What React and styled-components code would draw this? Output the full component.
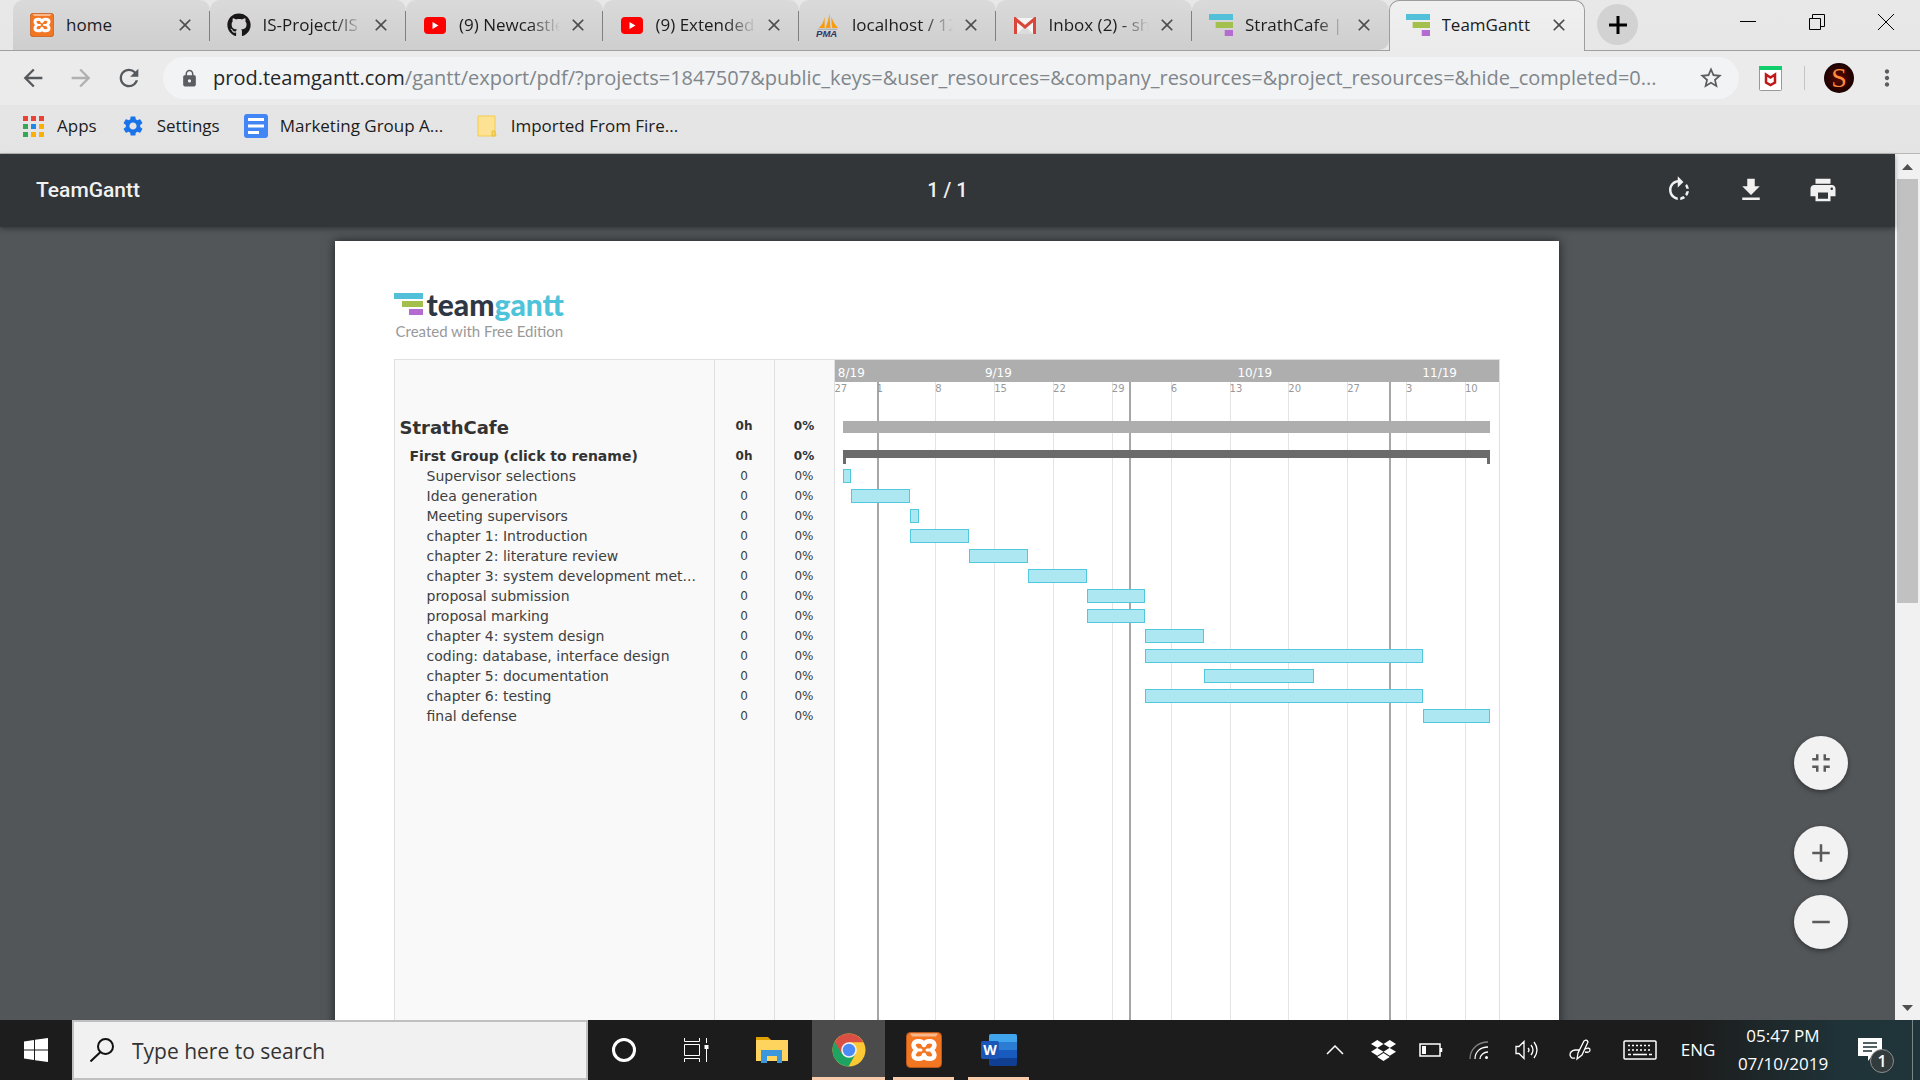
import React from 'react';
import styled, { createGlobalStyle, css } from 'styled-components';
import { FaDropbox, FaGithub } from 'react-icons/fa';
import {
  MdRotateRight, MdFileDownload, MdPrint, MdFullscreenExit, MdAdd, MdRemove,
  MdLock, MdStarBorder, MdMoreVert, MdArrowBack, MdArrowForward, MdRefresh, MdSettings, MdClose,
} from 'react-icons/md';

const Global = createGlobalStyle`
  * { box-sizing: border-box; }
  html, body, #root { height: 100%; }
  body { margin: 0; overflow: hidden; font-family: 'Open Sans', 'Noto Sans', sans-serif; }
  button { border: 0; padding: 0; background: none; font: inherit; color: inherit; cursor: pointer; }
`;

const Desktop = styled.div`
  display: flex;
  flex-direction: column;
  height: 100vh;
`;

/* ---------- browser chrome ---------- */

const Chrome = styled.header`
  flex: none;
  background: linear-gradient(#e8e8e8, #e4e4e4);
  border-bottom: 1px solid #b8b8b8;
`;

const TabStrip = styled.div`
  display: flex;
  height: 51px;
  padding-left: 13px;
  box-shadow: inset 0 -1px #a0a0a0;
`;

const Tabs = styled.nav`
  flex: 1;
  display: grid;
  grid-template-columns: repeat(8, minmax(0, 1fr));
  max-width: 1572px;
`;

const Tab = styled.div`
  display: flex;
  align-items: center;
  padding: 0 15px 0 17px;
  position: relative;
  height: 50px;
  background: linear-gradient(#dadada, #cecece);
  border-radius: 10px 10px 0 0;
  &:not(:last-child)::after {
    content: '';
    position: absolute;
    right: 0;
    top: 11px;
    width: 1px;
    height: 30px;
    background: #808080;
  }
  ${(p) => p.$beforeActive && css`
    &&::after { display: none; }
    border-bottom-right-radius: 10px;
  `}
  ${(p) => p.$active && css`
    height: 51px;
    padding: 0 15px 2px 16px;
    background: linear-gradient(#f0f0f0, #ebebeb);
    border: 1px solid #9d9d9d;
    border-bottom: 0;
  `}
`;

const Favicon = styled.span`
  flex: none;
  display: flex;
  justify-content: center;
  width: 24px;
  margin-right: 12px;
`;

const TabTitle = styled.a`
  flex: 1;
  min-width: 0;
  overflow: hidden;
  white-space: nowrap;
  font-size: 17px;
  line-height: 24px;
  color: #1c1c1c;
  text-decoration: none;
  ${(p) => p.$fade && css`mask-image: linear-gradient(to right, #000 70%, transparent);`}
`;

const TabClose = styled.button`
  flex: none;
  display: flex;
  margin-left: 8px;
  color: #4d4d4d;
`;

const NewTab = styled.button`
  width: 41px;
  height: 41px;
  margin: 4px 0 0 12px;
  border-radius: 50%;
  background: #d2d2d2;
  display: grid;
  place-items: center;
`;

const WindowControls = styled.div`
  display: flex;
  margin-left: auto;
  button { width: 69px; height: 43px; display: grid; place-items: center; }
`;

const Toolbar = styled.div`
  display: flex;
  align-items: center;
  height: 54px;
  padding: 0 20px 0 19px;
  background: #ebebeb;
  color: #5a5d61;
`;

const NavButton = styled.button`
  display: grid;
  place-items: center;
  width: 28px;
  margin-right: 20px;
  color: ${(p) => (p.$muted ? '#b0b0b0' : '#55585c')};
`;

const AddressBar = styled.div`
  flex: 1;
  min-width: 0;
  display: flex;
  align-items: center;
  height: 42px;
  padding: 0 15px 0 17px;
  border-radius: 21px;
  background: #f1f3f4;
`;

const Url = styled.a`
  flex: 1;
  min-width: 0;
  margin: 0 28px 0 14px;
  overflow: hidden;
  text-overflow: ellipsis;
  white-space: nowrap;
  font-size: 20px;
  line-height: 30px;
  color: #80868b;
  text-decoration: none;
  b { font-weight: 400; color: #24272a; }
`;

const Extension = styled.button`
  display: flex;
  margin-left: 20px;
`;

const ToolbarDivider = styled.span`
  width: 1px;
  height: 24px;
  margin: 0 19px 0 22px;
  background: #c4c4c4;
`;

const Avatar = styled.button`
  width: 30px;
  height: 30px;
  border-radius: 50%;
  background: radial-gradient(#5a0a00, #160000 75%);
  color: #ff8a3c;
  font: 400 28px/30px 'Liberation Serif', serif;
`;

const Bookmarks = styled.nav`
  display: flex;
  align-items: center;
  height: 48px;
  padding: 0 21px 6px;
  gap: 24px;
`;

const Bookmark = styled.a`
  display: flex;
  align-items: center;
  gap: 12px;
  min-width: ${(p) => (p.$wide ? 207 : 0)}px;
  color: #1c1c1c;
  text-decoration: none;
  font-size: 17px;
  line-height: 24px;
`;

const BookmarkIcon = styled.span`
  display: flex;
  justify-content: center;
  width: 24px;
`;

/* ---------- pdf viewer ---------- */

const Viewer = styled.main`
  position: relative;
  flex: 1;
  min-height: 0;
  display: flex;
  background: #525659;
`;

const ViewerBody = styled.div`
  flex: 1;
  min-width: 0;
  display: flex;
  flex-direction: column;
`;

const PdfBar = styled.div`
  z-index: 1;
  flex: none;
  display: grid;
  grid-template-columns: 1fr auto 1fr;
  align-items: center;
  height: 73px;
  padding: 0 36px 2px;
  background: #323639;
  box-shadow: 0 2px 5px rgba(0, 0, 0, 0.35);
  color: #f1f1f1;
  font: 500 20px/28px Roboto, sans-serif;
`;

const PdfTitle = styled.h1`
  margin: 0;
  font-size: 21px;
  font-weight: 500;
`;

const PdfActions = styled.div`
  display: flex;
  justify-content: flex-end;
  gap: 42px;
  padding-right: 21px;
  button { display: flex; }
`;

const Canvas = styled.div`
  flex: 1;
  min-height: 0;
  overflow: hidden;
  display: flex;
  justify-content: center;
  align-items: flex-start;
  padding: 14px 2px 0 0;
`;

const Sheet = styled.article`
  width: 100%;
  max-width: 1224px;
  min-height: 1584px;
  display: flex;
  flex-direction: column;
  padding: 48px 59px;
  background: #fff;
  box-shadow: 0 0 10px rgba(0, 0, 0, 0.6);
`;

const Brand = styled.div`
  display: flex;
  align-items: flex-start;
  gap: 4px;
  height: 32px;
  font: 900 30px/30px Lato, sans-serif;
  color: #2f3744;
  svg { margin-top: 4px; }
  em { font-style: normal; color: #4ec3d9; }
`;

const Edition = styled.p`
  margin: 0 0 18px 2px;
  font: 400 15px/20px Lato, sans-serif;
  color: #999;
`;

const Gantt = styled.section`
  flex: 1;
  display: grid;
  grid-template-columns: 440px minmax(0, 1fr);
  border: 1px solid #e0e0e0;
  border-width: 1px 1px 0;
  font-family: 'DejaVu Sans', sans-serif;
  color: #404040;
`;

const TaskTable = styled.table`
  width: 100%;
  height: 100%;
  table-layout: fixed;
  border-collapse: collapse;
  background: #f9f9f9;
  th, td {
    padding: 0;
    height: 20px;
    border-right: 1px solid #e0e0e0;
    font-size: 12px;
    line-height: 20px;
    text-align: center;
    font-weight: 400;
    overflow: hidden;
    white-space: nowrap;
    text-overflow: ellipsis;
  }
`;

const Row = styled.tr`
  && > * {
    font-weight: ${(p) => (p.$level < 2 ? 700 : 400)};
    ${(p) => p.$level < 2 && css`color: #333;`}
    ${(p) => p.$level === 0 && css`height: 40px;`}
  }
  && > th {
    text-align: left;
    font-size: ${(p) => (p.$level === 0 ? 18 : 14)}px;
    padding-top: ${(p) => (p.$level === 0 ? 4 : 0)}px;
    padding-left: ${(p) => [5, 15, 32][p.$level]}px;
  }
`;

const HeadRow = styled.tr`
  && > td { height: 46px; }
`;

const Filler = styled.tr`
  && > td { height: auto; }
`;

const Timeline = styled.div`
  position: relative;
`;

const Months = styled.div`
  position: relative;
  height: 22px;
  background: #aeaeae;
  font-size: 12px;
  line-height: 26px;
  color: #fff;
`;

const Days = styled.div`
  position: relative;
  height: 24px;
  font-size: 10px;
  line-height: 14px;
  color: #999;
`;

const Mark = styled.span`
  position: absolute;
  top: 0;
  ${(p) => p.$centered && css`transform: translateX(-50%);`}
`;

const GridLine = styled.i`
  position: absolute;
  top: 22px;
  bottom: 0;
  width: ${(p) => (p.$month ? 2 : 1)}px;
  background: ${(p) => (p.$month ? '#a6a6a6' : '#e4e4e4')};
`;

const Lane = styled.div`
  position: relative;
  height: ${(p) => (p.$level === 0 ? 40 : 20)}px;
`;

const Bar = styled.span`
  position: absolute;
  ${(p) => p.$level === 0 && css`top: 15px; height: 12px; background: #aeaeae;`}
  ${(p) => p.$level === 1 && css`
    top: 4px;
    height: 14px;
    border: solid #6b6b6b;
    border-width: 8px 3px 0;
  `}
  ${(p) => p.$level === 2 && css`
    top: 3px;
    height: 14px;
    background: #ade8f2;
    border: 1px solid #50c8dd;
  `}
`;

const ZoomControls = styled.div`
  position: absolute;
  right: 72px;
  bottom: 71px;
  display: grid;
  gap: 15px;
`;

const Fab = styled.button`
  width: 54px;
  height: 54px;
  border-radius: 50%;
  && { background: #f2f2f2; }
  color: #5a5a5a;
  display: grid;
  place-items: center;
  box-shadow: 0 2px 5px rgba(0, 0, 0, 0.4);
  &:first-child { margin-bottom: 21px; }
`;

const Scrollbar = styled.div`
  flex: none;
  width: 25px;
  display: flex;
  flex-direction: column;
  align-items: center;
  background: #f1f1f1;
  svg { flex: none; }
`;

const Thumb = styled.div`
  flex: none;
  width: 21px;
  height: 49%;
  margin-bottom: auto;
  background: #c1c1c1;
`;

/* ---------- taskbar ---------- */

const Taskbar = styled.footer`
  flex: none;
  display: flex;
  height: 60px;
  background: linear-gradient(to right, #1c1c1c 88%, #1f3338 96%, #20353a);
  color: #fff;
`;

const TaskButton = styled.button`
  display: grid;
  place-items: center;
  width: ${(p) => p.$width}px;
  ${(p) => p.$running && css`box-shadow: inset 0 -3px #f8cbaa;`}
  && { background: ${(p) => (p.$focused ? '#4b4b4b' : 'none')}; }
`;

const AppButtons = styled.div`
  display: flex;
  margin-left: 8px;
  gap: 14px;
`;

const Search = styled.label`
  display: flex;
  align-items: center;
  width: 516px;
  padding-left: 16px;
  gap: 18px;
  background: #f1f1f1;
  border: 2px solid #c0c0c0;
  input {
    flex: 1;
    min-width: 0;
    border: 0;
    padding: 2px 0 0;
    outline: 0;
    background: none;
    font: 400 21px/30px 'Open Sans', sans-serif;
    color: #333;
  }
  input::placeholder { color: #333; opacity: 1; }
`;

const Tray = styled.div`
  display: flex;
  align-items: center;
  margin-left: auto;
  font-size: 17px;
  line-height: 28px;
`;

const TrayButton = styled.button`
  display: grid;
  place-items: center;
  width: ${(p) => p.$width}px;
  height: 60px;
`;

const Clock = styled.button`
  width: 116px;
  margin-right: 12px;
  text-align: center;
  span { display: block; }
`;

const Notices = styled.button`
  position: relative;
  width: 60px;
  height: 60px;
  margin-right: 7px;
  border-right: 1px solid #7a8588;
  svg { position: absolute; left: 5px; top: 17px; }
  span {
    position: absolute;
    left: 17px;
    top: 29px;
    width: 24px;
    height: 24px;
    border: 1px solid #8d8d8d;
    border-radius: 50%;
    background: #333b3d;
    font-size: 16px;
    line-height: 22px;
    font-weight: 600;
  }
`;

/* ---------- drawings ---------- */

const XamppIcon = ({ width = 24, height = 24 }) => (
  <svg width={width} height={height} viewBox="0 0 36 36" aria-hidden="true">
    <rect x="0.5" y="0.5" width="35" height="35" rx="4" fill="#f37623" stroke="#b9571c" />
    <path d="M4 1.500h28l-2 3H6z" fill="#f9b88c" />
    <path
      d="M18 13C17 8 7.500 8 7.500 13c0 3 2.500 3.500 2.500 5s-2.500 2-2.500 5c0 5 9.500 5 10.500 0 1 5 10.500 5 10.500 0 0-3-2.500-3.500-2.500-5s2.500-2 2.500-5c0-5-9.500-5-10.500 0z"
      fill="none" stroke="#fff" strokeWidth="4.500" strokeLinejoin="round"
    />
    <path d="M11 18h4M21 18h4" stroke="#fff" strokeWidth="3" strokeLinecap="round" />
  </svg>
);

const YoutubeIcon = () => (
  <svg width="22" height="17" viewBox="0 0 22 17" aria-hidden="true">
    <rect width="22" height="17" rx="4" fill="#f00" />
    <path d="M8.500 5v7l6-3.500z" fill="#fff" />
  </svg>
);

const PmaIcon = () => (
  <svg width="25" height="25" viewBox="0 0 25 25" aria-hidden="true">
    <path d="M9 3Q8 10 3 15h6zM14 0q-1 8-4 15h5zM16 3q0 8 1 12h6q-5-5-7-12z" fill="#f89c0e" />
    <path d="M1 16h22l-2 1H3z" fill="#aaa" />
    <text x="0" y="24" fontFamily="Liberation Sans" fontSize="10" fontWeight="700" fontStyle="italic" fill="#33366b">PMA</text>
  </svg>
);

const GmailIcon = () => (
  <svg width="22" height="17" viewBox="0 0 22 17" aria-hidden="true">
    <path d="M1 1h20v16H1z" fill="#f4f4f4" />
    <path d="m3 17 8-8 8 8z" fill="#dcdcdc" />
    <path d="M1.500 17V2L11 10l9.500-8v15" fill="none" stroke="#d9463a" strokeWidth="3" />
  </svg>
);

const GanttIcon = ({ large }) => (
  <svg width={large ? 29 : 24} height="22" viewBox="0 0 29 22" preserveAspectRatio="none" aria-hidden="true">
    <path d="M0 0h29v6H0z" fill="#52c0d8" />
    <path d="M8 8h21v6H8z" fill="#a3c04c" />
    <path d={large ? 'M15 16h14v6H15z' : 'M19 16h10v6H19z'} fill="#b56cd0" />
  </svg>
);

const AppsIcon = () => {
  const colors = ['#ea4335', '#ea4335', '#ea4335', '#34a853', '#1e88e5', '#fbb003', '#34a853', '#fbb003', '#fbb003'];
  return (
    <svg width="22" height="22" viewBox="0 0 22 22" aria-hidden="true">
      {colors.map((c, i) => (
        <rect key={i} x={1 + (i % 3) * 8} y={1 + Math.floor(i / 3) * 8} width="5" height="5" fill={c} />
      ))}
    </svg>
  );
};

const DocsIcon = () => (
  <svg width="24" height="24" viewBox="0 0 24 24" aria-hidden="true">
    <rect width="24" height="24" rx="3" fill="#4285f4" />
    <path d="M4 5.500h16M4 12h16M4 18.500h11" stroke="#fff" strokeWidth="3" />
  </svg>
);

const FolderIcon = () => (
  <svg width="20" height="22" viewBox="0 0 20 22" aria-hidden="true">
    <path d="M1 1h17v15l1 5H1z" fill="#fde293" stroke="#f3cc4e" />
    <path d="M15 21v-5h3v5z" fill="#fbd75b" stroke="#e3b93a" strokeWidth="0.800" />
  </svg>
);

const ShieldIcon = () => (
  <svg width="23" height="25" viewBox="0 0 23 25" aria-hidden="true">
    <rect x="0.500" y="0.500" width="22" height="24" rx="1" fill="#fff" stroke="#999" />
    <path d="M0 0h23v4H0z" fill="#0fcf6c" />
    <path d="M7 8.500l4.500 3 4.500-3v8l-4.500 2.500L7 16.500z" fill="none" stroke="#c01818" strokeWidth="2.500" />
  </svg>
);

const Arrow = ({ down }) => (
  <svg width="25" height="25" viewBox="0 0 25 25" aria-hidden="true">
    <path d={down ? 'M7 10h11l-5.500 6z' : 'M7 16h11l-5.500-6z'} fill="#505050" />
  </svg>
);

const line = { fill: 'none', stroke: 'currentColor', 'aria-hidden': true };

const ChromeIcon = () => (
  <svg width="34" height="34" viewBox="0 0 34 34" aria-hidden="true">
    <circle cx="17" cy="17" r="16.500" fill="#fcc934" />
    <path d="M2.700 8.750A16.500 16.500 0 0 0 16.500 33.500l7.100-12.400L17 17z" fill="#1da462" />
    <path d="M2.700 8.750A16.500 16.500 0 0 1 31.300 9.200H17L9.900 21.100z" fill="#d94f44" />
    <circle cx="17" cy="17" r="7.800" fill="#f1f1f1" />
    <circle cx="17" cy="17" r="6.200" fill="#4c8bf5" />
  </svg>
);

const ExplorerIcon = () => (
  <svg width="32" height="28" viewBox="0 0 32 28" aria-hidden="true">
    <path d="M0 1h12l3 3v4H0z" fill="#dfa000" />
    <path d="M0 4h32v21H0z" fill="#ffd45e" />
    <path d="M5 27V14h21v13h-5v-7H11v7z" fill="#3b97dd" />
  </svg>
);

const WordIcon = () => (
  <svg width="36" height="32" viewBox="0 0 36 32" aria-hidden="true">
    <rect x="8" width="28" height="32" rx="2" fill="#103f91" />
    <path d="M8 16h28v8H8z" fill="#185abd" />
    <path d="M8 8h28v8H8z" fill="#2b7cd3" />
    <path d="M8 8V2q0-2 2-2h24q2 0 2 2v6z" fill="#41a5ee" />
    <rect y="7" width="18" height="18" rx="2" fill="#1a55b8" />
    <text x="9" y="21" textAnchor="middle" fontFamily="Open Sans" fontSize="14" fontWeight="700" fill="#fff">W</text>
  </svg>
);

/* ---------- data ---------- */

const tabs = [
  { title: 'home', icon: <XamppIcon /> },
  { title: 'IS-Project/IS', icon: <FaGithub size={24} color="#191717" />, fade: true },
  { title: '(9) Newcastle', icon: <YoutubeIcon />, fade: true },
  { title: '(9) Extended', icon: <YoutubeIcon />, fade: true },
  { title: 'localhost / 12', icon: <PmaIcon />, fade: true },
  { title: 'Inbox (2) - sh', icon: <GmailIcon />, fade: true },
  { title: 'StrathCafe | T', icon: <GanttIcon />, fade: true, beforeActive: true },
  { title: 'TeamGantt', icon: <GanttIcon />, active: true },
];

const bookmarks = [
  { label: 'Apps', icon: <AppsIcon /> },
  { label: 'Settings', icon: <MdSettings size={24} color="#1a73e8" /> },
  { label: 'Marketing Group A...', icon: <DocsIcon />, wide: true },
  { label: 'Imported From Fire...', icon: <FolderIcon /> },
];

// Days are counted from 27 August; the chart spans 79 days.
const SPAN = 79;
const pct = (day) => `${(day / SPAN) * 100}%`;

const months = [
  { label: '8/19', day: 2 },
  { label: '9/19', day: 19.5 },
  { label: '10/19', day: 50 },
  { label: '11/19', day: 72 },
];

const ticks = [
  [0, '27'], [5, '1', true], [12, '8'], [19, '15'], [26, '22'], [33, '29'], [35, '', true],
  [40, '6'], [47, '13'], [54, '20'], [61, '27'], [66, '', true], [68, '3'], [75, '10'],
];

const rows = [
  { name: 'StrathCafe', level: 0, from: 1, to: 78 },
  { name: 'First Group (click to rename)', level: 1, from: 1, to: 78 },
  { name: 'Supervisor selections', from: 1, to: 2 },
  { name: 'Idea generation', from: 2, to: 9 },
  { name: 'Meeting supervisors', from: 9, to: 10 },
  { name: 'chapter 1: Introduction', from: 9, to: 16 },
  { name: 'chapter 2: literature review', from: 16, to: 23 },
  { name: 'chapter 3: system development met...', from: 23, to: 30 },
  { name: 'proposal submission', from: 30, to: 37 },
  { name: 'proposal marking', from: 30, to: 37 },
  { name: 'chapter 4: system design', from: 37, to: 44 },
  { name: 'coding: database, interface design', from: 37, to: 70 },
  { name: 'chapter 5: documentation', from: 44, to: 57 },
  { name: 'chapter 6: testing', from: 37, to: 70 },
  { name: 'final defense', from: 70, to: 78 },
].map((r) => ({ level: 2, ...r }));

export default function App() {
  return (
    <Desktop>
      <Global />
      <Chrome>
        <TabStrip>
          <Tabs>
            {tabs.map((t) => (
              <Tab key={t.title} $active={t.active} $beforeActive={t.beforeActive}>
                <Favicon>{t.icon}</Favicon>
                <TabTitle href="#" $fade={t.fade}>{t.title}</TabTitle>
                <TabClose aria-label={`Close ${t.title}`}><MdClose size={20} /></TabClose>
              </Tab>
            ))}
          </Tabs>
          <NewTab aria-label="New tab">
            <svg width="18" height="18" {...line} strokeWidth="3"><path d="M9 0v18M0 9h18" /></svg>
          </NewTab>
          <WindowControls>
            <button aria-label="Minimize"><svg width="16" height="16" {...line}><path d="M0 7.500h16" /></svg></button>
            <button aria-label="Restore">
              <svg width="16" height="16" {...line}><path d="M.5 4.500h11v11H.5zM3.500 4.500v-4h12v12h-4" /></svg>
            </button>
            <button aria-label="Close window"><svg width="16" height="16" {...line}><path d="m0 0 16 16M16 0 0 16" /></svg></button>
          </WindowControls>
        </TabStrip>
        <Toolbar>
          <NavButton aria-label="Back"><MdArrowBack size={28} /></NavButton>
          <NavButton aria-label="Forward" $muted><MdArrowForward size={28} /></NavButton>
          <NavButton aria-label="Reload"><MdRefresh size={28} /></NavButton>
          <AddressBar>
            <MdLock size={19} />
            <Url href="#">
              <b>prod.teamgantt.com</b>/gantt/export/pdf/?projects=1847507&amp;public_keys=&amp;user_resources=&amp;company_resources=&amp;project_resources=&amp;hide_completed=0...
            </Url>
            <MdStarBorder size={26} />
          </AddressBar>
          <Extension aria-label="WebAdvisor"><ShieldIcon /></Extension>
          <ToolbarDivider />
          <Avatar aria-label="Profile">S</Avatar>
          <Extension aria-label="Menu"><MdMoreVert size={26} /></Extension>
        </Toolbar>
        <Bookmarks>
          {bookmarks.map((b) => (
            <Bookmark key={b.label} href="#" $wide={b.wide}><BookmarkIcon>{b.icon}</BookmarkIcon>{b.label}</Bookmark>
          ))}
        </Bookmarks>
      </Chrome>

      <Viewer>
        <ViewerBody>
          <PdfBar>
            <PdfTitle>TeamGantt</PdfTitle>
            <span>1 / 1</span>
            <PdfActions>
              <button aria-label="Rotate clockwise"><MdRotateRight size={30} /></button>
              <button aria-label="Download"><MdFileDownload size={30} /></button>
              <button aria-label="Print"><MdPrint size={30} /></button>
            </PdfActions>
          </PdfBar>
          <Canvas>
            <Sheet>
              <Brand><GanttIcon large /><span>team<em>gantt</em></span></Brand>
              <Edition>Created with Free Edition</Edition>
              <Gantt>
                <TaskTable>
                  <colgroup><col /><col width="60" /><col width="60" /></colgroup>
                  <tbody>
                    <HeadRow><td /><td /><td /></HeadRow>
                    {rows.map((r) => (
                      <Row key={r.name} $level={r.level}>
                        <th scope="row">{r.name}</th>
                        <td>{r.level < 2 ? '0h' : '0'}</td>
                        <td>0%</td>
                      </Row>
                    ))}
                    <Filler><td /><td /><td /></Filler>
                  </tbody>
                </TaskTable>
                <Timeline>
                  {ticks.slice(1).map(([day, , month]) => (
                    <GridLine key={day} $month={month} style={{ left: pct(day) }} />
                  ))}
                  <Months>
                    {months.map((m) => <Mark key={m.label} $centered style={{ left: pct(m.day) }}>{m.label}</Mark>)}
                  </Months>
                  <Days>
                    {ticks.map(([day, label]) => <Mark key={day} style={{ left: pct(day) }}>{label}</Mark>)}
                  </Days>
                  {rows.map((r) => (
                    <Lane key={r.name} $level={r.level}>
                      <Bar $level={r.level} style={{ left: pct(r.from), width: pct(r.to - r.from) }} />
                    </Lane>
                  ))}
                </Timeline>
              </Gantt>
            </Sheet>
          </Canvas>
        </ViewerBody>
        <Scrollbar>
          <Arrow />
          <Thumb />
          <Arrow down />
        </Scrollbar>
        <ZoomControls>
          <Fab aria-label="Fit to page"><MdFullscreenExit size={30} /></Fab>
          <Fab aria-label="Zoom in"><MdAdd size={30} /></Fab>
          <Fab aria-label="Zoom out"><MdRemove size={30} /></Fab>
        </ZoomControls>
      </Viewer>

      <Taskbar>
        <TaskButton $width={72} aria-label="Start">
          <svg width="24" height="24" viewBox="0 0 24 24" fill="#fff" aria-hidden="true">
            <path d="M0 3.400 10 2v9.500H0zM11 1.800 24 0v11.500H11zM0 12.500h10V22L0 20.600zM11 12.500h13V24l-13-1.800z" />
          </svg>
        </TaskButton>
        <Search>
          <svg width="24" height="24" color="#111" {...line} strokeWidth="2"><circle cx="15.500" cy="8.500" r="7.500" /><path d="M10.500 14 .5 23.500" /></svg>
          <input type="text" aria-label="Search" placeholder="Type here to search" />
        </Search>
        <TaskButton $width={72} aria-label="Cortana">
          <svg width="26" height="26" {...line} strokeWidth="3"><circle cx="13" cy="13" r="10.500" /></svg>
        </TaskButton>
        <TaskButton $width={72} aria-label="Task view">
          <svg width="26" height="24" {...line}>
            <path d="M1.500 0v3.500h15V0M1.500 6.500h15v11h-15zM1.500 24v-3.500h15V24M23.500 0v5M23.500 11v13" />
            <path d="M23.500 7v4" strokeWidth="4" />
          </svg>
        </TaskButton>
        <TaskButton $width={80} aria-label="File Explorer"><ExplorerIcon /></TaskButton>
        <TaskButton $width={73} $running $focused aria-label="Chrome"><ChromeIcon /></TaskButton>
        <AppButtons>
          <TaskButton $width={61} $running aria-label="XAMPP"><XamppIcon width={36} height={36} /></TaskButton>
          <TaskButton $width={61} $running aria-label="Word"><WordIcon /></TaskButton>
        </AppButtons>
        <Tray>
          <TrayButton $width={48} aria-label="Show hidden icons">
            <svg width="18" height="10" {...line} strokeWidth="1.500"><path d="m1 9 8-8 8 8" /></svg>
          </TrayButton>
          <TrayButton $width={48} aria-label="Dropbox"><FaDropbox size={25} /></TrayButton>
          <TrayButton $width={48} aria-label="Battery">
            <svg width="24" height="14" {...line} strokeWidth="1.500"><path d="M1 1h20v12H1zM22.500 5v4" /><path d="M5 3v8" strokeWidth="4" /></svg>
          </TrayButton>
          <TrayButton $width={48} aria-label="Network">
            <svg width="20" height="20" {...line} strokeWidth="1.300">
              <path d="M1 19C1 9 9 2 19 2" opacity=".45" /><path d="M6 19C6 12 11 7 19 7M11 19c0-4 4-7 8-7" /><circle cx="17.500" cy="17.500" r="1.500" fill="#fff" stroke="none" />
            </svg>
          </TrayButton>
          <TrayButton $width={48} aria-label="Volume">
            <svg width="24" height="20" {...line} strokeWidth="1.300">
              <path d="M1 6.500h3l5-5v17l-5-5H1zM13 8q2 2 0 4M16 5q4 5 0 10M19 2q6 8 0 16" />
            </svg>
          </TrayButton>
          <TrayButton $width={58} aria-label="Pen workspace">
            <svg width="22" height="22" {...line} strokeWidth="1.300">
              <path d="M8 20l1-6 6-12q3-2 4 1l-6 13zM10 11H6q-5 1-5 5 1 4 5 3M16 10q5-2 5 1 0 3-5 2" />
            </svg>
          </TrayButton>
          <TrayButton $width={62} aria-label="Touch keyboard">
            <svg width="34" height="20" {...line} strokeWidth="1.500">
              <rect x="1" y="1" width="32" height="18" rx="1" /><path d="M5 5.500h24M5 10h24" strokeDasharray="2 2" /><path d="M5 14.500h3M10 14.500h14M26 14.500h3" />
            </svg>
          </TrayButton>
          <TrayButton $width={54} aria-label="Language">ENG</TrayButton>
          <Clock><span>05:47 PM</span><span>07/10/2019</span></Clock>
          <Notices aria-label="Notifications">
            <svg width="25" height="25" viewBox="0 0 25 25" aria-hidden="true">
              <path d="M0 1h24v18H14l-4 5v-5H0z" fill="#fff" /><path d="M5 6h14M5 10h14M5 14h9" stroke="#1d2f33" strokeWidth="1.500" />
            </svg>
            <span>1</span>
          </Notices>
        </Tray>
      </Taskbar>
    </Desktop>
  );
}
